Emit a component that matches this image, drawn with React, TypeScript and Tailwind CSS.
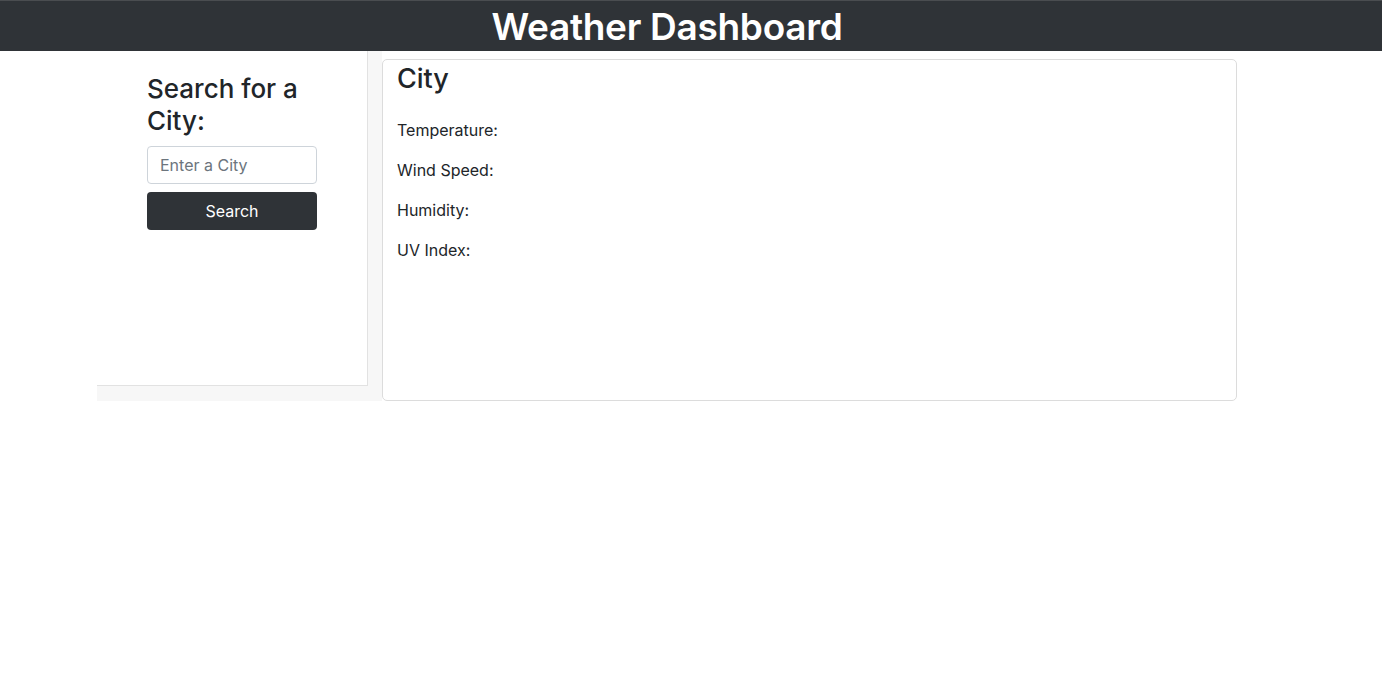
const stats = ['Temperature:', 'Wind Speed:', 'Humidity:', 'UV Index:'];

export default function App() {
  return (
    <div className="min-h-screen bg-white text-[#212529] font-['Inter',sans-serif]">
      <header className="h-[51px] bg-[#2f3337] border-t border-[#4a4d50]">
        <div className="ml-[97px] w-[1140px] h-full flex items-center justify-center">
          <h1 className="text-[37px] font-semibold text-white leading-none tracking-[-0.3px]">
            Weather Dashboard
          </h1>
        </div>
      </header>
      <main className="ml-[97px] w-[1140px] flex">
        <aside className="w-[285px] h-[350px] bg-[#f7f7f7] flex flex-col">
          <div className="w-[271px] h-[335px] bg-white border-r border-b border-[#e2e2e2] pl-[50px] pt-[22px]">
            <h2 className="text-[26px] font-medium leading-[32px] w-[170px]">
              Search for a City:
            </h2>
            <form className="mt-[9px] w-[170px] flex flex-col gap-2">
              <input
                type="text"
                placeholder="Enter a City"
                className="h-[38px] px-3 border border-[#ced4da] rounded-[4px] text-[16px] placeholder:text-[#6c757d] outline-none"
              />
              <button
                type="button"
                className="h-[38px] bg-[#2f3337] text-white rounded-[4px] text-[16px]"
              >
                Search
              </button>
            </form>
          </div>
        </aside>
        <section className="mt-[8px] w-[855px] h-[342px] border border-[#dcdcdc] rounded-[5px] px-[14px] pt-[1px]">
          <h2 className="text-[27px] font-medium leading-[36px]">City</h2>
          <div className="mt-[21px] flex flex-col gap-4">
            {stats.map((label) => (
              <p key={label} className="text-[16px] leading-[24px]">
                {label}
              </p>
            ))}
          </div>
        </section>
      </main>
    </div>
  );
}
